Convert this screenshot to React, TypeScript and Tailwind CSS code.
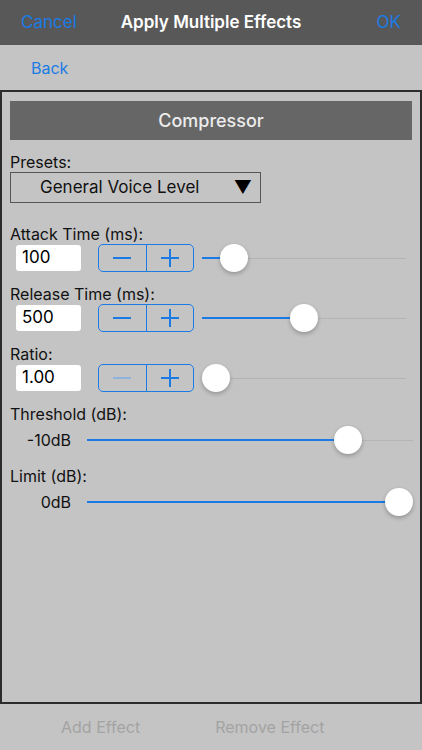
const blue = "#1b7be5";

function Stepper({ minusDisabled }: { minusDisabled?: boolean }) {
  return (
    <div className="flex h-[28px] w-[96px] rounded-[5px] border border-[#1b7be5]">
      <div className="flex flex-1 items-center justify-center border-r border-[#1b7be5]">
        <div
          className={minusDisabled ? "h-[2px] w-[18px] bg-[#8fb3dc]" : "h-[2px] w-[18px] bg-[#1b7be5]"}
        />
      </div>
      <div className="relative flex flex-1 items-center justify-center">
        <div className="h-[2px] w-[18px] bg-[#1b7be5]" />
        <div className="absolute h-[18px] w-[2px] bg-[#1b7be5]" />
      </div>
    </div>
  );
}

function Slider({ pct }: { pct: number }) {
  return (
    <div className="relative flex h-[28px] flex-1 items-center">
      <div className="h-[2px] bg-[#1b7be5]" style={{ width: `${pct}%` }} />
      <div className="h-[1px] flex-1 bg-[#b4b4b4]" />
      <div
        className="absolute top-0 h-[28px] w-[28px] -translate-x-1/2 rounded-full bg-white shadow-[0_2px_4px_rgba(0,0,0,0.25)]"
        style={{ left: `calc(14px + (100% - 28px) * ${pct / 100})` }}
      />
    </div>
  );
}

function StepRow({
  label,
  value,
  pct,
  minusDisabled,
  first,
}: {
  label: string;
  value: string;
  pct: number;
  minusDisabled?: boolean;
  first?: boolean;
}) {
  return (
    <div className={first ? "mt-[21px]" : "mt-[12px]"}>
      <div className="h-[20px] text-[16px] leading-[20px] text-[#111]">{label}</div>
      <div className="flex items-center">
        <div className="ml-[6px] flex h-[26px] w-[65px] items-center rounded-[3px] bg-white pl-[6px] text-[17px] text-black">
          {value}
        </div>
        <div className="ml-[17px]">
          <Stepper minusDisabled={minusDisabled} />
        </div>
        <div className="ml-[8px] mr-[6px] flex flex-1">
          <Slider pct={pct} />
        </div>
      </div>
    </div>
  );
}

function DbRow({ label, value, pct }: { label: string; value: string; pct: number }) {
  return (
    <div className="mt-[12px]">
      <div className="h-[20px] text-[16px] leading-[20px] text-[#111]">{label}</div>
      <div className="mt-[2px] flex items-center">
        <div className="w-[61px] text-right text-[16px] text-[#111]">{value}</div>
        <div className="ml-[16px] mr-[-1px] flex flex-1">
          <Slider pct={pct} />
        </div>
      </div>
    </div>
  );
}

export default function App() {
  return (
    <div
      className="flex h-[750px] w-[422px] flex-col bg-[#c4c4c4]"
      style={{ fontFamily: "Inter, 'Noto Sans', sans-serif" }}
    >
      <div className="grid h-[45px] grid-cols-[1fr_auto_1fr] items-center bg-[#585858] px-[21px] text-[17px]">
        <span className="text-[#1b7be5]">Cancel</span>
        <span className="font-semibold text-white">Apply Multiple Effects</span>
        <span className="text-right text-[#1b7be5]">OK</span>
      </div>

      <div className="flex h-[45px] items-center px-[31px] text-[16px]" style={{ color: blue }}>
        Back
      </div>

      <div className="flex flex-1 flex-col border-2 border-[#2c2c2c] px-[8px] pt-[9px]">
        <div className="flex h-[39px] items-center justify-center bg-[#666666] text-[18px] font-medium text-[#ececec]">
          Compressor
        </div>

        <div className="mt-[12px] h-[20px] text-[16px] leading-[20px] text-[#111]">Presets:</div>
        <div className="flex h-[31px] w-[251px] items-center border border-[#555] pl-[29px] pr-[8px] text-[17px] text-[#111]">
          <span className="flex-1">General Voice Level</span>
          <span className="text-[18px] text-black">▼</span>
        </div>

        <StepRow first label="Attack Time (ms):" value="100" pct={10} />
        <StepRow label="Release Time (ms):" value="500" pct={50} />
        <StepRow label="Ratio:" value="1.00" pct={0} minusDisabled />
        <DbRow label="Threshold (dB):" value="-10dB" pct={83} />
        <DbRow label="Limit (dB):" value="0dB" pct={100} />
      </div>

      <div className="flex h-[46px] items-center gap-[75px] pl-[61px] text-[16px] text-[#a3a3a3]">
        <span>Add Effect</span>
        <span>Remove Effect</span>
      </div>
    </div>
  );
}
